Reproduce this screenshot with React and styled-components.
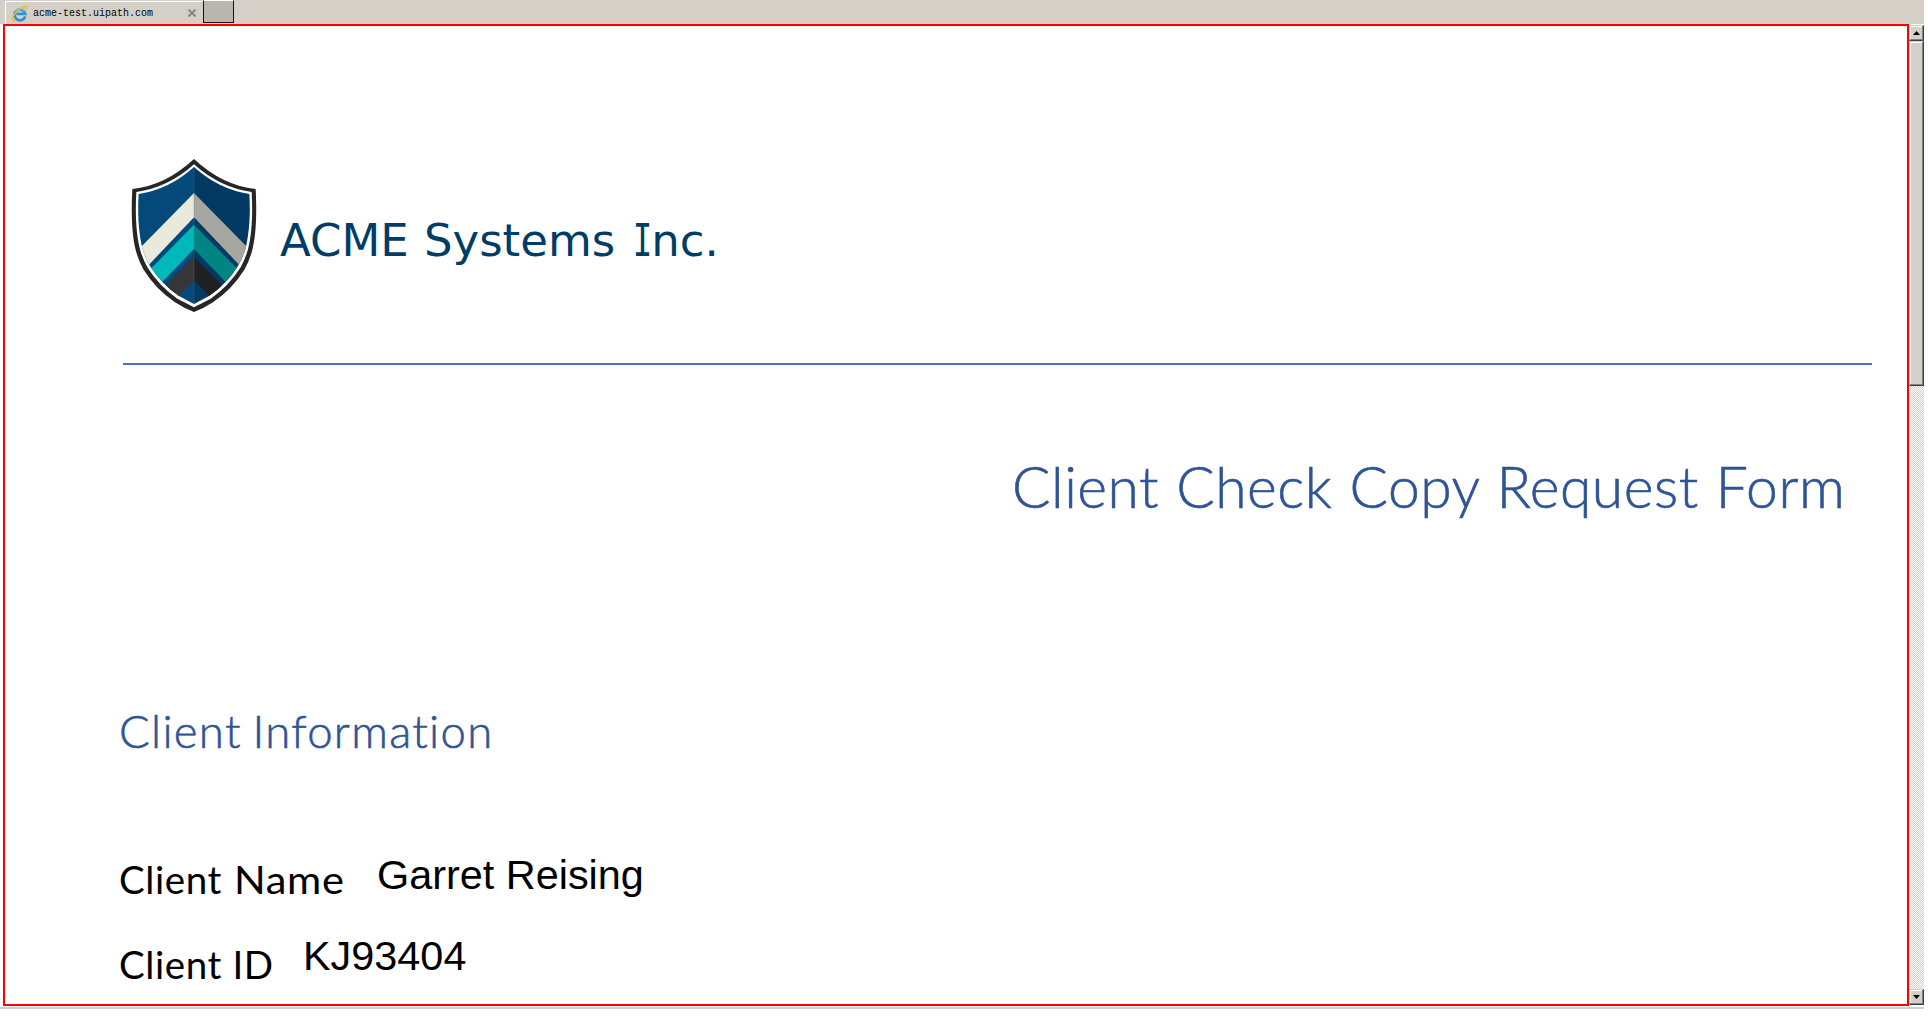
import React from 'react';
import styled, { createGlobalStyle } from 'styled-components';

const Global = createGlobalStyle`
  * { box-sizing: border-box; }
  body { margin: 0; background: #fff; overflow: hidden; }
`;
const Window = styled.div`
  width: 1924px; height: 1009px; display: flex; flex-direction: column;
  background: #fff; border-bottom: 2px solid #d4d0c8;
`;
const TabBar = styled.div`
  height: 24px; flex: none; display: flex; background: #d4d0c8; padding-left: 5px;
`;
const Tab = styled.div`
  width: 198px; height: 23px; margin-top: 1px; display: flex; align-items: center;
  border-top: 1px solid #fff; border-left: 1px solid #fff; padding: 0 7px 0 5px;
`;
const TabTitle = styled.span`
  flex: 1; margin: 2px 0 0 5px; white-space: pre; color: #000;
  font: 10px/14px "Liberation Mono", monospace;
`;
const NewTab = styled.div`
  width: 31px; height: 23px; background: #bab6ae;
  border: 1px solid #fff; border-right-color: #111; border-bottom-color: #111; border-left-color: #111;
`;
const Body = styled.div`flex: 1; min-height: 0; display: flex; padding-left: 3px;`;
const Page = styled.main`
  width: 1906px; height: 982px; border: 2px solid #f00; background: #fff;
  padding: 131px 0 0 115px; overflow: hidden;
`;
const Brand = styled.header`
  display: flex; height: 208px; width: 1749px; margin-left: 3px;
  border-bottom: 2px solid #4472c4;
`;
const ShieldSvg = styled.svg`width: 128px; height: 157px; margin-left: 7px; flex: none;`;
const BrandName = styled.div`
  margin: 55px 0 0 22px; height: 58px; color: #003d66; white-space: pre;
  font: 45px/58px "DejaVu Sans", sans-serif; word-spacing: 1px;
`;
const SerifI = styled.span`
  display: inline-block; font-family: "DejaVu Sans Mono", monospace;
  transform: scaleX(0.72); margin: 0 -4.5px 0 -2px;
`;
const Text = styled.div`
  width: max-content; white-space: pre; color: ${p => p.$color || '#000'};
  font: ${p => p.$weight || 400} ${p => p.$size}px/60px ${p => p.$face || 'Lato'}, sans-serif;
  letter-spacing: ${p => p.$ls || 0}px;
  word-spacing: ${p => p.$ws || 0}px;
  -webkit-text-stroke: ${p => p.$stroke || 0}px ${p => p.$color || '#000'};
  margin: ${p => p.$m || 0};
`;
const Wide = styled.span`
  display: inline-block; margin-left: 1.5px;
  transform: scaleX(1.08); transform-origin: left;
`;
const Row = styled.div`display: flex; height: 60px; margin-top: ${p => p.$top}px;`;
const Label = styled.div`width: ${p => p.$w}px; flex: none;`;
const Scroll = styled.div`
  width: 15px; height: 980px; margin-top: 1px; display: flex; flex-direction: column;
  background: repeating-conic-gradient(#d4d0c8 0 25%, #fff 0 50%) 0 0 / 2px 2px;
`;
const Raised = styled.div`
  height: ${p => p.$h}px; flex: none; background: #d4d0c8; display: flex; align-items: center; justify-content: center;
  border: 1px solid #d4d0c8; border-right-color: #404040; border-bottom-color: #404040;
  box-shadow: inset -1px -1px #808080, inset 1px 1px #fff;
  margin-top: ${p => p.$top || 0};
`;

const Shield = () => (
  <ShieldSvg viewBox="60 51 384 471">
    <defs>
      <clipPath id="field">
        <path d="M252 81Q326 148 418 162C422 230 417 280 407 325Q399 352 384 378Q350 432 297 468L252 492L207 468Q154 432 120 378Q105 352 97 325C87 280 82 230 86 162Q178 148 252 81Z" />
      </clipPath>
    </defs>
    <path d="M252 57Q338 137 437 147C441 225 438 285 427 330Q419 360 404 388Q366 449 309 487Q280 506 252 516Q224 506 195 487Q138 449 100 388Q85 360 77 330C66 285 63 225 67 147Q166 137 252 57Z" fill="#262626" />
    <path d="M252 73Q330 143 425 156C429 228 425 284 414 328Q406 356 392 382Q356 439 302 476L252 502L202 476Q148 439 112 382Q98 356 90 328C79 284 75 228 79 156Q174 143 252 73Z" fill="#fff" />
    <g clipPath="url(#field)">
      <path d="M60 60H252V520H60Z" fill="#034a7b" />
      <path d="M252 60H444V520H252Z" fill="#003a62" />
      <path d="M252 159V232L60 434V354Z" fill="#e9e9dc" />
      <path d="M252 159V232L444 434V354Z" fill="#a5a69f" />
      <path d="M252 254V327L60 527V450Z" fill="#00b8b9" />
      <path d="M252 254V327L444 527V450Z" fill="#008583" />
      <path d="M252 350V421L140 538V465Z" fill="#363636" />
      <path d="M252 350V421L364 538V465Z" fill="#212121" />
      <path d="M252 81V492" stroke="#56788c" strokeWidth="1" />
    </g>
  </ShieldSvg>
);
const Explorer = () => (
  <svg width="17" height="17" viewBox="0 0 17 17">
    <path d="M14.2 11.3A5.4 5.4 0 1 1 14.3 8.9H5.5" fill="none" stroke="#2b93d8" strokeWidth="2.7" />
    <path d="M13.6 6.5A5.4 5.4 0 0 0 4.2 6.2" fill="none" stroke="#66c8f2" strokeWidth="1.4" />
    <path d="M4.5 15.2C.6 17 .2 13.6 3.4 9.4C6.8 4.6 12.5.6 15 1.4C16.2 1.9 15.8 3.4 15 5" fill="none" stroke="#efb935" strokeWidth="1.5" />
  </svg>
);

export default function App() {
  return (
    <>
      <Global />
      <Window>
        <TabBar>
          <Tab><Explorer /><TabTitle>acme-test.uipath.com</TabTitle>
            <svg width="8" height="8" viewBox="0 0 8 8"><path d="M.5 .5L7.5 7.5M7.5 .5L.5 7.5" stroke="#858585" strokeWidth="2" /></svg>
          </Tab>
          <NewTab />
        </TabBar>
        <Body>
          <Page>
            <Brand><Shield /><BrandName>ACME Systems <SerifI>I</SerifI>nc.</BrandName></Brand>
            <Text $size={57} $weight={300} $ls={0.5} $ws={1.2} $stroke={0.6} $color="#2f5496" $m="91px 0 0 892px">Client Check Copy Request Form</Text>
            <Text $size={45.5} $weight={300} $ls={1.3} $ws={-3} $stroke={0.6} $color="#2f5496" $m="185px 0 0 -1px">Client Information</Text>
            <Row $top={88}>
              <Label $w={257}><Text $size={38.5} $ls={0.6} $m="0 0 0 -1px">Client <Wide>Name</Wide></Text></Label>
              <Text $size={41.4} $face="Liberation Sans" $m="-4px 0 0">Garret Reising</Text>
            </Row>
            <Row $top={25}>
              <Label $w={183}><Text $size={38.5} $ls={0.6} $m="0 0 0 -1px">Client ID</Text></Label>
              <Text $size={41.4} $face="Liberation Sans" $m="-8px 0 0">KJ93404</Text>
            </Row>
          </Page>
          <Scroll>
            <Raised $h={16}><svg width="7" height="4"><path d="M3.5 0L7 4H0Z" /></svg></Raised>
            <Raised $h={345} />
            <Raised $h={16} $top="auto"><svg width="7" height="4"><path d="M0 0H7L3.5 4Z" /></svg></Raised>
          </Scroll>
        </Body>
      </Window>
    </>
  );
}
